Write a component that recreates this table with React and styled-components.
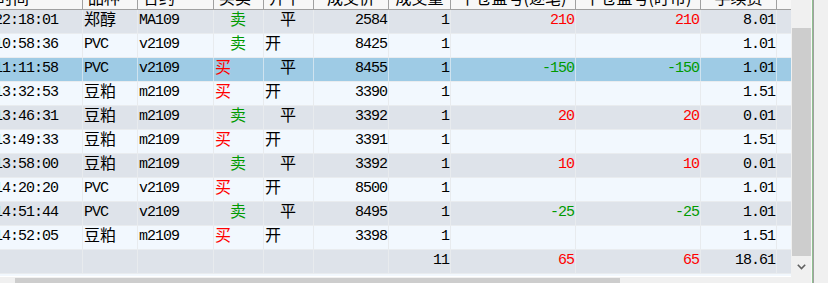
import React from 'react';
import styled, { createGlobalStyle } from 'styled-components';

const GlobalStyle = createGlobalStyle`
  html, body {
    margin: 0;
    padding: 0;
    background: #f0f0f0;
    overflow: hidden;
  }
`;

const COLUMNS = '91px 55px 76px 50px 50px 75px 62px 125px 125px 76px 1fr';
const RED = '#ff0000';
const GREEN = '#009a00';
const HAN = /[\u4e00-\u9fff]/;

const rows = [
  { time: '22:18:01', name: '郑醇', code: 'MA109', side: 'sell', flag: 'close', price: '2584', qty: '1', pnl: '210', mkt: '210', fee: '8.01' },
  { time: '10:58:36', name: 'PVC', code: 'v2109', side: 'sell', flag: 'open', price: '8425', qty: '1', pnl: '', mkt: '', fee: '1.01' },
  { time: '11:11:58', name: 'PVC', code: 'v2109', side: 'buy', flag: 'close', price: '8455', qty: '1', pnl: '-150', mkt: '-150', fee: '1.01', selected: true },
  { time: '13:32:53', name: '豆粕', code: 'm2109', side: 'buy', flag: 'open', price: '3390', qty: '1', pnl: '', mkt: '', fee: '1.51' },
  { time: '13:46:31', name: '豆粕', code: 'm2109', side: 'sell', flag: 'close', price: '3392', qty: '1', pnl: '20', mkt: '20', fee: '0.01' },
  { time: '13:49:33', name: '豆粕', code: 'm2109', side: 'buy', flag: 'open', price: '3391', qty: '1', pnl: '', mkt: '', fee: '1.51' },
  { time: '13:58:00', name: '豆粕', code: 'm2109', side: 'sell', flag: 'close', price: '3392', qty: '1', pnl: '10', mkt: '10', fee: '0.01' },
  { time: '14:20:20', name: 'PVC', code: 'v2109', side: 'buy', flag: 'open', price: '8500', qty: '1', pnl: '', mkt: '', fee: '1.01' },
  { time: '14:51:44', name: 'PVC', code: 'v2109', side: 'sell', flag: 'close', price: '8495', qty: '1', pnl: '-25', mkt: '-25', fee: '1.01' },
  { time: '14:52:05', name: '豆粕', code: 'm2109', side: 'buy', flag: 'open', price: '3398', qty: '1', pnl: '', mkt: '', fee: '1.51' },
];

const total = { qty: '11', pnl: '65', mkt: '65', fee: '18.61' };

const headers = [
  { text: '时间', align: 'left' },
  { text: '品种', align: 'left' },
  { text: '合约', align: 'left' },
  { text: '买卖', align: 'left' },
  { text: '开平', align: 'left' },
  { text: '成交价', align: 'center' },
  { text: '成交量', align: 'center' },
  { text: '平仓盈亏(逐笔)', align: 'center' },
  { text: '平仓盈亏(盯市)', align: 'center' },
  { text: '手续费', align: 'center' },
];

const Frame = styled.div`
  display: flex;
  width: 828px;
  height: 283px;
  overflow: hidden;
  background: #f0f0f0;
`;

const GridPane = styled.div`
  display: flex;
  flex-direction: column;
  width: 791px;
  flex: none;
`;

const Viewport = styled.div`
  height: 277px;
  box-sizing: border-box;
  overflow: hidden;
  background: #f2f8fe;
  border-bottom: 1px solid #ffffff;
  flex: none;
`;

/* the sheet is scrolled 8px to the right */
const Sheet = styled.div`
  margin-left: -8px;
  width: calc(100% + 8px);
`;

const HeaderRow = styled.div`
  display: grid;
  grid-template-columns: ${COLUMNS};
  height: 10px;
  box-sizing: border-box;
  background: #f7f7f7;
  border-bottom: 1px solid #a0a0a0;
  overflow: hidden;
`;

const HeaderCell = styled.div`
  display: flex;
  align-items: flex-end;
  justify-content: ${p => (p.$align === 'center' ? 'center' : 'flex-start')};
  padding: 0 0 4px ${p => (p.$align === 'center' ? 0 : 5)}px;
  border-right: ${p => (p.$last ? 'none' : '1px solid #a0a0a0')};
  overflow: hidden;
  font-family: "Noto Sans CJK SC", sans-serif;
  font-size: 16px;
  line-height: 16px;
  color: #000;
  white-space: nowrap;
`;

const rowBg = p => (p.$selected ? '#9ecbe5' : p.$odd ? '#dee3ea' : '#f2f8fe');

const Row = styled.div`
  display: grid;
  grid-template-columns: ${COLUMNS};
  height: 24px;
  box-sizing: border-box;
  background: ${rowBg};
  border-bottom: 1px solid #e9ecef;
`;

const Cell = styled.div`
  overflow: hidden;
  white-space: nowrap;
  box-sizing: border-box;
  text-align: ${p => p.$align || 'left'};
  padding: 0 1px 0 ${p => (p.$indent ? 16 : p.$pad || 1)}px;
  border-right: ${p => (p.$filler ? 'none' : `1px solid ${p.$selected ? '#cfe3ef' : '#e8ebee'}`)};
  color: ${p => p.$tone || '#000'};
  font-family: ${p => (p.$han ? '"Noto Sans CJK SC", sans-serif' : '"Liberation Mono", monospace')};
  font-size: ${p => (p.$han ? 16 : 15)}px;
  line-height: ${p => (p.$han ? 16 : 22)}px;
  letter-spacing: ${p => (p.$han ? 0 : -1)}px;
`;

const HScroll = styled.div`
  height: 17px;
  padding: 1px 0 0 15px;
  box-sizing: border-box;
  background: #f0f0f0;
  flex: none;
`;

const HThumb = styled.div`
  width: 605px;
  height: 15px;
  background: #cdcdcd;
`;

const SideBar = styled.div`
  display: flex;
  flex-direction: column;
  width: 20px;
  flex: none;
  background: #f0f0f0;
`;

const VScroll = styled.div`
  display: flex;
  flex-direction: column;
  height: 277px;
  padding-top: 28px;
  box-sizing: border-box;
`;

const VThumb = styled.div`
  height: 228px;
  margin-left: 1px;
  background: #cdcdcd;
`;

const ArrowButton = styled.div`
  flex: 1;
  display: flex;
  align-items: center;
  justify-content: center;
  padding-left: 1px;
`;

const Edge = styled.div`
  width: 1px;
  flex: none;
  background: ${p => p.$color};
`;

const Margin = styled.div`
  flex: 1;
  background: #f0f0f0;
`;

function Chevron() {
  return (
    <svg width="9" height="6" viewBox="0 0 9 6">
      <polyline points="0.8,0.8 4.5,4.6 8.2,0.8" fill="none" stroke="#606060" strokeWidth="1.6" />
    </svg>
  );
}

const toneOf = v => (v === '' ? undefined : v.startsWith('-') ? GREEN : RED);

function DataRow({ row, odd }) {
  const sel = row.selected;
  const isHan = v => HAN.test(v);
  return (
    <Row $odd={odd} $selected={sel}>
      <Cell $selected={sel} $pad={2}>{row.time}</Cell>
      <Cell $selected={sel} $han={isHan(row.name)}>{row.name}</Cell>
      <Cell $selected={sel}>{row.code}</Cell>
      {row.side === 'sell' ? (
        <Cell $selected={sel} $han $indent $tone={GREEN}>卖</Cell>
      ) : (
        <Cell $selected={sel} $han $tone={RED}>买</Cell>
      )}
      {row.flag === 'close' ? (
        <Cell $selected={sel} $han $indent>平</Cell>
      ) : (
        <Cell $selected={sel} $han>开</Cell>
      )}
      <Cell $selected={sel} $align="right">{row.price}</Cell>
      <Cell $selected={sel} $align="right">{row.qty}</Cell>
      <Cell $selected={sel} $align="right" $tone={toneOf(row.pnl)}>{row.pnl}</Cell>
      <Cell $selected={sel} $align="right" $tone={toneOf(row.mkt)}>{row.mkt}</Cell>
      <Cell $selected={sel} $align="right">{row.fee}</Cell>
      <Cell $filler />
    </Row>
  );
}

function TotalRow({ odd }) {
  return (
    <Row $odd={odd}>
      <Cell />
      <Cell />
      <Cell />
      <Cell />
      <Cell />
      <Cell />
      <Cell $align="right">{total.qty}</Cell>
      <Cell $align="right" $tone={RED}>{total.pnl}</Cell>
      <Cell $align="right" $tone={RED}>{total.mkt}</Cell>
      <Cell $align="right">{total.fee}</Cell>
      <Cell $filler />
    </Row>
  );
}

export default function App() {
  return (
    <>
      <GlobalStyle />
      <Frame>
        <GridPane>
          <Viewport>
            <Sheet>
              <HeaderRow>
                {headers.map((h, i) => (
                  <HeaderCell key={h.text} $align={h.align}>{h.text}</HeaderCell>
                ))}
                <HeaderCell $last />
              </HeaderRow>
              {rows.map((r, i) => (
                <DataRow key={r.time} row={r} odd={i % 2 === 0} />
              ))}
              <TotalRow odd />
            </Sheet>
          </Viewport>
          <HScroll>
            <HThumb />
          </HScroll>
        </GridPane>
        <SideBar>
          <VScroll>
            <VThumb />
            <ArrowButton>
              <Chevron />
            </ArrowButton>
          </VScroll>
        </SideBar>
        <Edge $color="#fafafa" />
        <Edge $color="#8fc08f" />
        <Edge $color="#a0a0a0" />
        <Margin />
      </Frame>
    </>
  );
}
